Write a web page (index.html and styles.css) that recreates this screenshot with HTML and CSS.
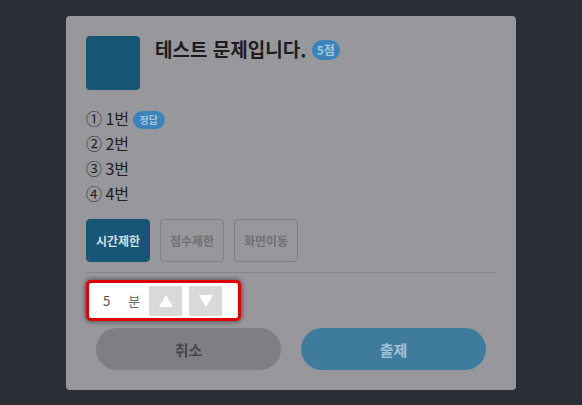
FILE: index.html
```html
<!DOCTYPE html>
<html lang="ko">
<head>
    <meta charset="UTF-8">
    <meta name="viewport" content="width=device-width, initial-scale=1.0">
    <title>문제 출제</title>
    <link rel="stylesheet" href="styles.css">
</head>
<body>
    <div class="modal">
        <div class="header">
            <div class="thumb"></div>
            <h2 class="title">테스트 문제입니다. <span class="badge">5점</span></h2>
        </div>
        <ul class="options">
            <li>① 1번 <span class="badge small">정답</span></li>
            <li>② 2번</li>
            <li>③ 3번</li>
            <li>④ 4번</li>
        </ul>
        <div class="tabs">
            <button class="tab active">시간제한</button>
            <button class="tab">점수제한</button>
            <button class="tab">화면이동</button>
        </div>
        <hr class="divider">
        <div class="spotlight">
            <span class="value">5</span>
            <span class="unit">분</span>
            <button class="spin">
                <svg width="14" height="12" viewBox="0 0 14 12"><path d="M7 0 L14 12 L0 12 Z" fill="#fff"/></svg>
            </button>
            <button class="spin">
                <svg width="14" height="12" viewBox="0 0 14 12"><path d="M0 0 L14 0 L7 12 Z" fill="#fff"/></svg>
            </button>
        </div>
        <div class="actions">
            <button class="btn cancel">취소</button>
            <button class="btn submit">출제</button>
        </div>
    </div>
</body>
</html>
```

FILE: styles.css
```css
body {
    margin: 0;
    padding-top: 16px;
    background-color: #2b2e36;
    font-family: "Noto Sans CJK KR", "Noto Sans", sans-serif;
}

.modal {
    width: 410px;
    margin: 0 auto;
    padding: 20px;
    background-color: #98989c;
    border-radius: 4px;
}

.header {
    display: flex;
    gap: 15px;
}

.thumb {
    width: 54px;
    height: 54px;
    border-radius: 4px;
    background-color: #185677;
}

.title {
    margin: 0;
    font-size: 19px;
    line-height: 26px;
    color: #1d1d20;
}

.badge {
    display: inline-block;
    vertical-align: 2px;
    height: 20px;
    padding: 0 5px;
    border-radius: 10px;
    background-color: #3a83bb;
    color: #a9c6dc;
    font-size: 12px;
    line-height: 20px;
    font-weight: bold;
}

.badge.small {
    height: 18px;
    padding: 0 7px;
    border-radius: 9px;
    font-size: 10px;
    line-height: 18px;
    vertical-align: 1px;
}

.options {
    list-style: none;
    margin: 16px 0 0;
    padding: 0;
    font-size: 16px;
    line-height: 25px;
    color: #1e1e22;
    word-spacing: -1px;
}

.tabs {
    display: flex;
    gap: 10px;
    margin-top: 13px;
}

.tab {
    width: 64px;
    height: 43px;
    border: 1px solid #7f7f84;
    border-radius: 4px;
    background: transparent;
    color: #707074;
    font-family: inherit;
    font-size: 12px;
    font-weight: bold;
    padding: 0;
}

.tab.active {
    background-color: #185677;
    border-color: #185677;
    color: #d2dde4;
}

.divider {
    margin: 10px 0 0;
    border: 0;
    border-top: 1px solid #86868a;
}

.spotlight {
    display: flex;
    align-items: center;
    width: 149px;
    height: 35px;
    margin-top: 7px;
    border: 3px solid #e00000;
    border-radius: 5px;
    background-color: #fff;
    box-shadow: 0 0 4px 1px rgba(0, 0, 0, 0.45);
}

.value {
    margin-left: 14px;
    font-size: 13px;
    color: #555;
}

.unit {
    margin-left: 18px;
    font-size: 13px;
    color: #666;
}

.spin {
    display: flex;
    align-items: center;
    justify-content: center;
    width: 33px;
    height: 30px;
    margin-left: 7px;
    border: 0;
    padding: 0;
    background-color: #d9d9d9;
}

.unit + .spin {
    margin-left: 9px;
}

.actions {
    display: flex;
    gap: 20px;
    margin-top: 7px;
    padding: 0 10px;
}

.btn {
    flex: 1;
    height: 42px;
    border: 0;
    border-radius: 21px;
    font-family: inherit;
    font-size: 15px;
    font-weight: bold;
}

.cancel {
    background-color: #7f7f83;
    color: #48484c;
}

.submit {
    background-color: #3e7b9d;
    color: #a3c3d6;
}
```
